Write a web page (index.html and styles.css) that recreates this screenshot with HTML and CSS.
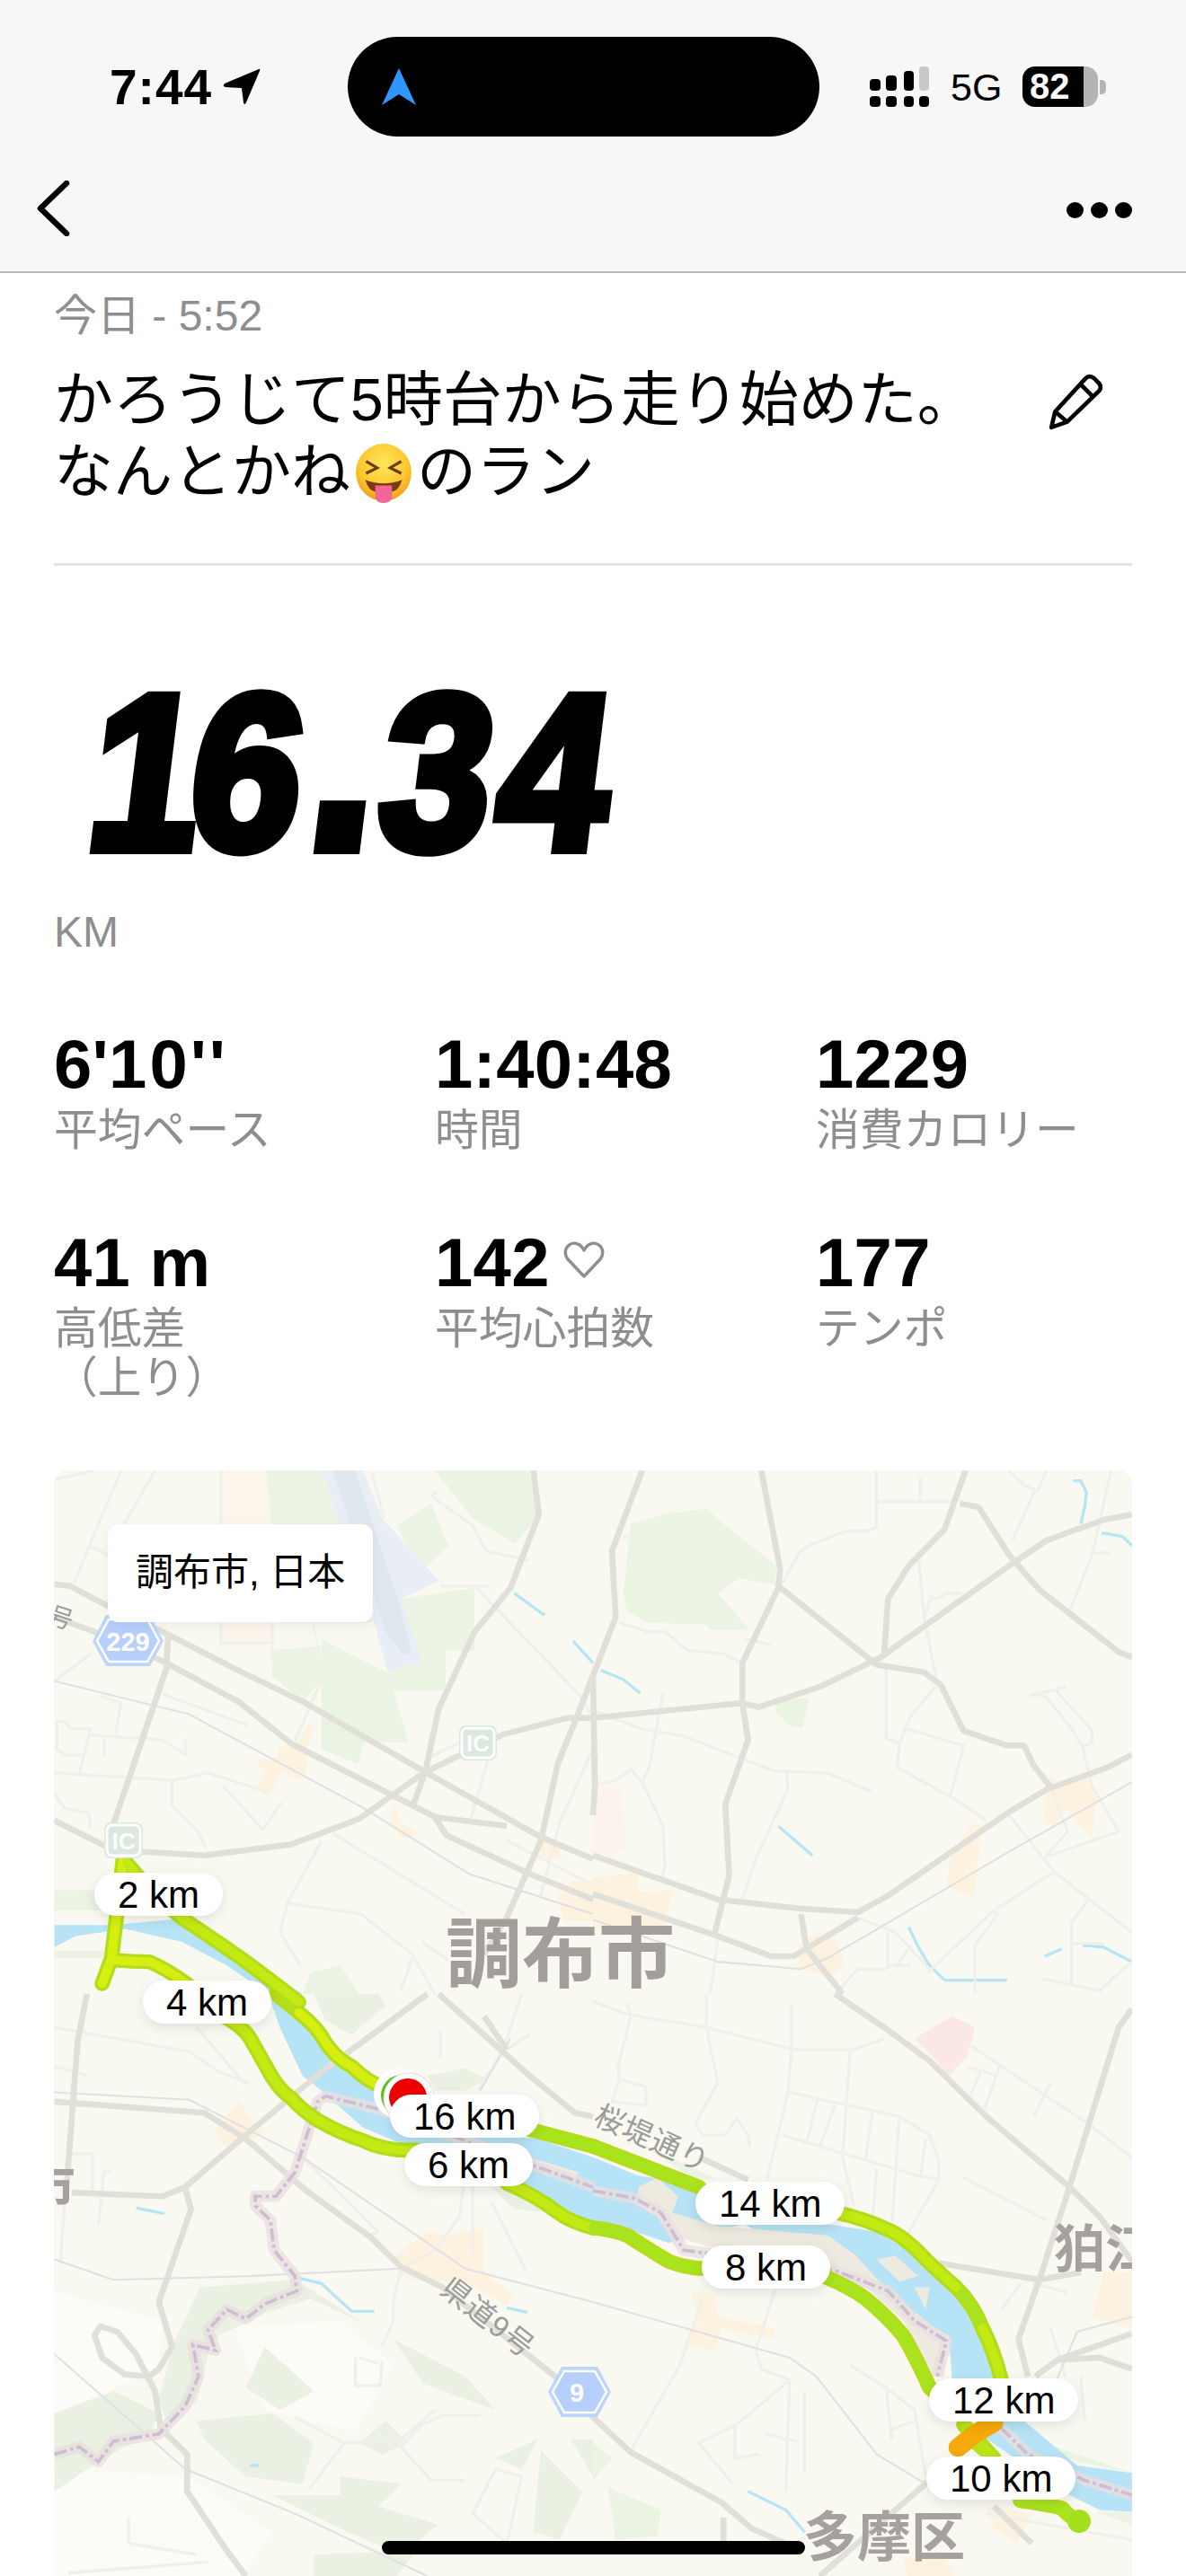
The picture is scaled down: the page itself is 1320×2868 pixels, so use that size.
FILE: index.html
```html
<!DOCTYPE html>
<html lang="ja">
<head>
<meta charset="utf-8">
<title>ラン</title>
<link rel="stylesheet" href="styles.css">
</head>
<body>
<header class="top">
  <div class="status">
    <span class="time">7:44</span>
    <svg class="loc" viewBox="0 0 42 41"><path d="M40 1 Q42 0 41 3 L26 38 Q24 42 23 38 L21 22 L3 21 Q-1 20 2 17 Z"/></svg>
    <div class="island"><svg class="nav" viewBox="0 0 38 41"><path d="M19 0 L38 41 L19 29 L0 41 Z"/></svg></div>
    <svg class="signal" viewBox="0 0 66 45">
      <rect x="0" y="14" width="12" height="13" rx="4"/><rect x="18" y="10" width="12" height="17" rx="4"/><rect x="38" y="5" width="11" height="22" rx="4"/><rect class="off" x="55" y="0" width="11" height="27" rx="4"/>
      <rect x="0" y="33" width="12" height="12" rx="4"/><rect x="18" y="33" width="12" height="12" rx="4"/><rect x="38" y="33" width="11" height="12" rx="4"/><rect x="55" y="33" width="11" height="12" rx="4"/>
    </svg>
    <span class="net">5G</span>
    <div class="batt"><span class="batt-body">82</span><span class="batt-nub"></span></div>
  </div>
  <div class="navbar">
    <svg class="back" viewBox="0 0 38 62"><path d="M34 3 L5 31 L34 59"/></svg>
    <div class="dots"><i></i><i></i><i></i></div>
  </div>
</header>

<main class="content">
  <p class="date">今日 - 5:52</p>
  <div class="title-row">
    <h1 class="title">かろうじて5時台から走り始めた。<br>なんとかね<svg class="emoji" viewBox="0 0 66 66"><defs><radialGradient id="face" cx="50%" cy="35%" r="65%"><stop offset="0" stop-color="#ffe65c"/><stop offset=".7" stop-color="#fcc52c"/><stop offset="1" stop-color="#f39a16"/></radialGradient></defs><ellipse cx="33" cy="32" rx="30" ry="31" fill="url(#face)"/><path d="M14 20 L26 27 L14 33 M52 20 L40 27 L52 33" fill="none" stroke="#6b3a10" stroke-width="3"/><path d="M13 40 Q33 48 53 40 Q49 52 42 53 H24 Q17 52 13 40 Z" fill="#7a3a12"/><path d="M24 46 H42 V57 Q42 65 33 65 Q24 65 24 57 Z" fill="#f2659b"/></svg>のラン</h1>
    <svg class="pencil" viewBox="0 0 60 62"><path d="M5 58 L9 41 L42 5 Q46 1 51 5 L56 10 Q60 15 56 19 L22 52 Z M36 11 L50 25 M9 41 L22 52"/></svg>
  </div>
  <hr class="rule">
  <div class="bignum"><span class="bigtext"><span class="bigone">1</span>6<span class="bigdot">.</span>34</span></div>
  <p class="unit">KM</p>

  <section class="stats">
    <div><div class="val">6'1<span class="val-gap">0''</span></div><div class="lab">平均ペース</div></div>
    <div><div class="val">1:40:48</div><div class="lab">時間</div></div>
    <div><div class="val">1229</div><div class="lab">消費カロリー</div></div>
    <div><div class="val">41 m</div><div class="lab">高低差<br>（上り）</div></div>
    <div><div class="val">142<svg class="heart" viewBox="0 0 46 42"><path d="M23 39 L5 20 C-3 9 8 -2 18 4 Q21 6 23 10 Q25 6 28 4 C38 -2 49 9 41 20 Z"/></svg></div><div class="lab">平均心拍数</div></div>
    <div><div class="val">177</div><div class="lab">テンポ</div></div>
  </section>

  <section class="map">
    <svg class="mapsvg" viewBox="60 1637 1200 1231">
      <rect class="land" x="60" y="1637" width="1200" height="1231"/>
      <!-- terrain -->
      <g class="pale">
        <path transform="matrix(.4209 0 0 .4133 0 2220)" d="M144 800 L430 880 L420 1010 L144 1130 Z M620 900 L900 880 L1040 1000 L940 1180 L700 1120 Z M144 1280 L500 1300 L720 1450 L640 1568 H144 Z"/>
      </g>
      <g class="peach">
        <path transform="matrix(.4209 0 0 .4082 0 1580)" d="M584 140 H700 L740 290 H584 Z M584 555 H720 V610 H584 Z"/>
      </g>
      <g class="green">
        <path transform="matrix(.4209 0 0 .4082 0 1580)" d="M705 140 H860 L990 300 L985 555 H830 L860 700 L800 770 L720 700 V630 L840 620 L825 555 H740 Z M850 600 L1040 700 L1030 740 L1040 740 L1080 880 L965 880 L945 940 L850 900 Z M1060 490 L1255 460 V630 H1178 V740 H1020 Z M1050 290 L1140 230 L1185 345 L1110 420 Z M1150 140 H1400 L1420 270 L1360 340 L1250 270 Z M144 1285 H290 V1340 H144 Z M144 1450 H280 V1470 H144 Z M820 1510 L900 1490 L950 1568 H800 Z"/>
        <path transform="matrix(.4209 0 0 .4082 660 1580)" d="M100 285 L210 255 L300 245 L350 290 L485 400 L480 450 L385 435 L330 475 L415 575 H310 L300 560 L145 555 L90 525 L80 480 Z M480 770 L570 760 L555 840 H525 L485 800 Z"/>
        <path transform="matrix(.4209 0 0 .4133 660 2220)" d="M120 400 L330 500 L270 500 Z M40 1330 L180 1390 L170 1460 L60 1470 Z M0 1210 L50 1250 L0 1310 Z M1140 1190 L1425 1290 L1280 1260 Z M1330 1395 H1425 V1430 Z"/>
      </g>
      <g class="hill">
        <path transform="matrix(.4209 0 0 .4133 0 2220)" d="M530 790 L780 770 L960 885 L820 820 L700 860 L560 930 L520 1100 L440 1150 L420 1090 L460 940 Z M144 1130 L300 1070 L420 1130 L400 1180 L260 1260 L144 1340 Z M1040 930 L1230 1030 L1310 1120 L1120 1050 Z M700 950 L830 1070 L740 1120 L650 1060 Z M1020 1150 L1080 1210 L1010 1240 L950 1210 Z M520 1150 L720 1130 L830 1210 L800 1320 L650 1300 L540 1200 Z M900 1300 L1060 1320 L1000 1380 L1160 1430 L1060 1510 L900 1440 L720 1350 L900 1350 Z M1310 1250 L1420 1200 L1380 1280 Z M1430 1230 L1540 1340 L1480 1470 L1410 1450 Z M1510 1200 H1568 V1300 Z M830 1510 L1100 1500 L1050 1568 H830 Z M830 0 H1000 L1020 30 L930 110 L860 70 Z M1130 220 L1230 200 L1290 230 L1230 260 L1150 260 Z M1300 520 L1370 520 L1480 590 L1360 580 Z"/>
      </g>
      <g class="air">
        <path transform="matrix(.4209 0 0 .4082 0 1580)" d="M850 140 H960 L1010 270 L1160 440 L1060 490 L1115 660 L1025 690 L990 560 Z"/>
      </g>
      <g class="run">
        <path transform="matrix(.4209 0 0 .4082 0 1580)" d="M880 140 H940 L1060 520 L1090 640 L1065 640 L1020 580 Z"/>
      </g>
      <g class="orange">
        <path transform="matrix(.4209 0 0 .4082 0 1580)" d="M790 880 L815 830 L830 845 L810 900 L810 975 L790 985 L745 960 L720 1010 L705 1030 L680 1005 L700 960 L675 930 L730 925 L740 895 Z M1040 1050 L1060 1100 L1110 1130 L1070 1145 L1030 1110 Z M1475 1300 L1510 1260 H1568 V1370 H1490 Z M1430 1150 H1480 V1200 H1430 Z"/>
        <path transform="matrix(.4209 0 0 .4082 660 1580)" d="M0 1250 L120 1235 L120 1290 L210 1285 L190 1390 H0 Z M1000 1105 H1030 L1015 1230 L1005 1305 L935 1270 L945 1200 Z M1200 1000 L1210 970 L1240 1000 L1300 965 L1330 1030 L1320 1140 L1290 1110 L1250 1060 L1220 1115 L1195 1100 Z M545 1430 L600 1400 L640 1420 L665 1480 L630 1520 L545 1500 Z"/>
        <path transform="matrix(.4209 0 0 .4133 0 2220)" d="M570 360 L630 290 L700 380 L590 410 Z M1040 710 L1130 640 L1180 650 L1280 630 L1280 750 L1355 810 L1340 840 L1230 780 L1100 770 L1060 760 Z"/>
        <path transform="matrix(.4209 0 0 .4133 660 2220)" d="M260 800 L320 810 L330 870 L480 900 L480 930 L340 900 L320 960 L240 940 L280 880 Z M1350 750 H1425 V900 L1320 870 Z M1040 1380 L1160 1400 L1120 1480 L1060 1440 Z M820 1520 L920 1500 L960 1568 H830 Z"/>
      </g>
      <g class="pink">
        <path transform="matrix(.4209 0 0 .4133 660 2220)" d="M850 120 L950 60 L1010 90 L990 170 L940 220 L900 170 Z"/>
        <path class="pink-soft" transform="matrix(.4209 0 0 .4082 660 1580)" d="M0 1000 H75 L85 1170 L40 1200 L0 1180 Z"/>
      </g>
      <!-- water -->
      <g class="water">
        <path transform="matrix(.4209 0 0 .4082 0 1580)" d="M144 1380 H300 L480 1362 L600 1440 L800 1568 H710 L600 1490 L480 1425 L330 1390 L200 1410 L144 1440 Z"/>
        <path transform="matrix(.4209 0 0 .4133 0 2220)" d="M710 0 H750 L850 140 L960 240 L1040 300 L1200 370 L1420 390 L1568 440 V620 L1480 570 L1340 510 L1100 420 L960 360 L850 260 L800 220 L740 90 Z"/>
        <path transform="matrix(.4209 0 0 .4133 660 2220)" d="M0 440 L120 490 L330 520 L620 620 L750 640 L880 720 L990 830 L1060 960 L1090 1040 L1140 1150 L1280 1270 L1425 1290 V1395 L1340 1390 L1240 1340 L1100 1240 L1030 1190 L1080 1150 L950 1040 L940 920 L820 850 L700 770 L610 740 L400 620 L200 670 L80 630 L0 610 Z"/>
      </g>
      <g class="sand">
        <path transform="matrix(.4209 0 0 .4133 660 2220)" d="M120 520 L170 495 L225 545 L210 590 L330 625 L620 650 L690 700 L780 800 L930 920 L930 1030 L900 1030 L820 880 L720 790 L610 730 L300 680 L210 650 L170 600 L120 570 Z M750 715 L800 705 L860 760 L810 775 Z M850 790 L890 790 L880 850 Z"/>
        <path transform="matrix(.4209 0 0 .4133 0 2220)" d="M1400 440 L1530 480 L1520 500 L1440 480 Z"/>
      </g>
      <g class="stream">
        <path transform="matrix(.4209 0 0 .4082 0 1580)" d="M1360 475 L1440 535 M1515 605 L1568 665"/>
        <path transform="matrix(.4209 0 0 .4082 660 1580)" d="M20 685 L80 710 L125 748 M490 1110 L580 1190 M1270 168 H1290 L1305 200 L1300 240 L1290 285 M1345 310 L1400 320 L1425 345 M835 1385 L860 1440 L890 1490 L930 1530 H1095 M1195 1465 L1240 1445 M1295 1435 L1350 1440 L1425 1480"/>
        <path transform="matrix(.4209 0 0 .4133 0 2220)" d="M360 576 L435 592 M790 765 L850 780 L930 855 H990 M1340 845 L1395 858 M660 1270 H685"/>
        <path transform="matrix(.4209 0 0 .4133 660 2220)" d="M410 1340 L510 1390 L560 1450"/>
      </g>
      <!-- thin roads -->
      <g class="thin">
        <path transform="matrix(.4209 0 0 .4082 0 1580)" d="M144 165 L250 140 M320 140 L190 460 M410 140 L320 300 M235 345 L285 370 M144 715 L240 640 M584 290 V140 M584 555 V610 H720 M720 555 V660 L840 625 L855 700 L780 880 M265 755 L320 775 L305 860 M150 825 H175 L185 845 H240 L210 965 M150 825 V900 L170 915 H220 M240 862 L430 875 L490 915 L490 870 M275 870 V920 M144 965 L455 985 L550 965 L700 1015 M455 985 V1055 L520 1120 L545 1170 M590 1000 L695 1120 L745 1045 M144 1020 L170 1060 L235 1075 L240 1115 M430 750 L655 835 M880 1130 L1230 1350 M850 1150 L760 1320 L740 1400 L795 1490 M760 1320 L955 1350 L1090 1460 L1150 1568 M1140 920 L1220 880 M1260 460 L1530 750 L1560 800 M1290 930 L1245 1090 M1340 1150 L1568 1270 M1060 1560 L1090 1470 M1115 1425 L1185 1475 M1140 210 L1250 290 L1285 360 L1400 385 M1140 210 L1155 198 M985 150 L1015 270 M1290 455 H1165 M1568 900 L1480 1100 L1430 1300"/>
        <path transform="matrix(.4209 0 0 .4082 660 1580)" d="M750 140 V225 H960 M865 160 V225 M750 225 V295 L725 305 H670 L570 345 L545 365 L500 450 M70 555 L145 580 H190 L250 630 L345 640 L395 665 M400 600 L470 615 M80 320 L440 415 L490 455 M185 745 L150 945 L130 990 L185 1110 L190 1220 L180 1260 M0 1000 L60 985 L100 955 L130 990 M0 795 L130 845 L240 865 L480 960 L620 965 L735 1015 M512 960 L515 1010 L430 1200 L395 1310 M862 385 L875 540 L910 720 M875 540 L895 485 L910 490 L935 475 H975 M775 680 V870 L810 885 L805 950 L945 1030 L1040 1095 M1100 1080 L1220 1235 L1425 1400 M830 845 L980 890 L945 1030 M905 730 L840 810 L810 885 M1170 190 L1110 330 M1100 140 L1140 180 L1175 195 L1200 140 M1370 140 L1320 370 L1260 525 M1320 365 H1365 M1155 755 L1250 730 M1220 735 L1320 850 V880 L1295 895 L1270 850 L1200 760 L1175 750 M1295 895 L1320 1000 L1390 1125 L1195 1195 L1255 1125 L1210 1000 M1060 1340 L885 1510 M1060 1340 L1070 1350 L1010 1435 V1568 M1220 1235 L1060 1340 M1310 1310 L1265 1375 V1540 M1265 1430 H1350 M1185 1525 L1340 1560 L1380 1520 L1425 1480 M780 1400 V1490 H840 M700 1360 L800 1400 L890 1500 M840 1435 L800 1495 M640 1568 L700 1500 H770 L790 1490 M310 1568 L330 1420"/>
        <path transform="matrix(.4209 0 0 .4133 0 2220)" d="M144 90 L500 155 L580 210 L660 240 M144 195 L230 220 M160 720 L180 430 H245 V530 M260 620 L275 480 L295 475 M520 90 L650 245 M800 440 L1000 640 L980 650 M1225 520 L1215 600 L1150 690 L1060 740 L1040 830 V880 L1010 950 M1250 400 V700 M1300 560 L1390 745 M1380 0 L1330 150 L1265 260 M1400 110 L1340 150 M1165 100 V170 M1270 1135 H1170 L1115 1160 L1060 1220 L1140 1310 H1230 M780 1140 L910 1210 L820 1330 M1150 1120 L1060 1200 L910 1210 M1310 1280 L1250 1400 L1340 1480 L1380 1300 Z M340 1410 V1480 L520 1510 M180 1560 L550 1530 M940 980 V1055 H1005 L1010 990 M950 980 L1000 995"/>
        <path transform="matrix(.4209 0 0 .4133 660 2220)" d="M0 20 L90 55 L300 90 L530 150 H690 L770 120 M90 25 L100 60 L65 200 L70 230 L140 250 V300 M70 230 L50 290 L140 300 M300 0 V90 L330 240 L270 350 L290 380 H350 L380 335 L410 380 L415 410 M525 30 V150 L515 270 L460 500 M520 265 L810 330 L890 380 L915 450 V500 L860 490 L500 380 M595 280 L565 400 M640 300 L600 410 M740 310 L720 450 M810 330 L790 630 M680 150 L660 440 L690 570 M880 390 L865 495 M750 470 L740 600 M915 500 L830 650 M290 820 L230 1000 L100 1230 M490 770 L430 960 L445 1010 L520 1040 L510 1340 M520 1040 L380 1160 L280 1210 L370 1320 M375 1160 V1250 L440 1240 M455 1185 L540 1205 M560 1070 V1290 M680 1000 L780 1065 L850 1120 L880 1300 M785 1175 L850 1150 M775 1055 L790 1200 M1080 850 L1130 780 M1210 900 L1250 1030 M1000 140 L1310 350 L1425 440 M1075 195 L1035 310 M990 195 L1070 220 M1025 210 L1000 270 M1210 240 L1165 330 M980 495 L1200 610 M1290 1030 L1300 1150 M1165 780 L1255 805 M1040 1400 L1425 1470"/>
      </g>
      <g class="rail">
        <path transform="matrix(.4209 0 0 .4082 0 1580)" d="M144 715 L500 805 L960 1060 L1240 1240 L1568 1350"/>
        <path transform="matrix(.4209 0 0 .4082 660 1580)" d="M0 1365 L330 1480 L550 1500 L620 1470 L1100 1180 L1425 990"/>
        <path transform="matrix(.4209 0 0 .4133 0 2220)" d="M144 265 L500 285 L800 440 L1230 740 L1568 830 M144 715 L300 770 L660 760 L1060 740 M144 970 L490 1280 L780 1400 L1130 1568 M1350 120 L1270 260"/>
        <path transform="matrix(.4209 0 0 .4133 660 2220)" d="M0 830 L520 980 L590 1030 L750 1240 L880 1320 M1425 870 L1280 910 L1180 1150"/>
      </g>
      <!-- major roads -->
      <g class="major">
        <path transform="matrix(.4209 0 0 .4082 0 1580)" d="M144 450 L185 455 L285 510 L430 580 L620 680 L800 770 L1120 960 L1430 1140 L1568 1200 M144 540 L250 580 L430 660 L630 770 L770 885 L1150 1085 L1180 1135 L1400 1240 L1568 1310 M144 1095 L280 1165 L380 1180 L540 1190 L770 1160 L950 1090 L1120 965 L1220 915 L1330 860 L1500 815 L1568 815 M1410 140 L1425 260 L1350 460 L1255 580 L1160 790 L1125 960 L1090 1060 M445 580 L440 680 L280 1165 M1568 700 L1530 800 L1475 940 L1430 1150 L1340 1360 L1280 1460 M1150 1085 L1340 1110"/>
        <path transform="matrix(.4209 0 0 .4082 660 1580)" d="M0 1190 L330 1310 L550 1335 L700 1345 L780 1300 L1095 1075 L1200 1010 L1360 950 L1425 915 M0 1295 L330 1410 L470 1465 L530 1465 L700 1360 M0 815 L390 775 L440 785 L600 730 L760 650 L1100 400 L1200 330 L1350 275 L1425 260 M130 140 L50 360 L60 540 L0 700 L5 1000 L0 1080 M445 140 L495 410 L490 460 L395 665 L395 775 L410 875 L350 1050 L360 1245 L320 1410 M490 455 L750 670 L875 690 L920 725 L980 850 L1095 890 L1140 890 L1165 945 L1215 1010 M985 140 L930 300 L835 400 L780 490 L770 640 M970 230 L1020 240 L1100 370 L1180 465 L1260 530 L1390 635 L1425 650 M550 1350 L565 1445 L660 1568"/>
        <path transform="matrix(.4209 0 0 .4133 0 2220)" d="M144 290 L540 320 L650 390 L810 530 L980 655 L1060 735 L1170 790 L1480 1040 L1568 1140 M1130 0 L850 210 L650 380 L490 520 L430 545 L190 535 M230 0 L205 130 L175 535 M490 525 L505 580 L420 830 L455 950 L420 1010 L395 1030 L330 1025 L270 980 L250 920 L265 895 L310 910 L360 970 L410 1070 L425 1170 L495 1240 L495 1340 L600 1500 L650 1568 M1160 0 L1400 220 L1520 320 L1568 330 M1280 60 L1340 150"/>
        <path transform="matrix(.4209 0 0 .4133 660 2220)" d="M0 1140 L100 1235 L340 1370 L420 1440 L530 1490 M640 0 L770 90 L890 180 L1040 330 L1260 520 L1340 600 L1425 720 M1425 40 L1390 90 L1260 520 L1180 770 L1125 930 L1150 1030 M915 725 L1180 770 L1290 750 M1170 1030 L1230 985 L1340 980 L1425 1010 M1230 985 L1425 915 M280 440 L410 500 M890 1310 L600 1568 M345 1410 V1480 M1060 1380 L1160 1480"/>
      </g>
      <!-- boundary -->
      <g class="halo">
        <path transform="matrix(.4209 0 0 .4133 0 2220)" d="M144 1240 L210 1220 L260 1260 L300 1205 L420 1185 L490 1110 L525 1030 L510 945 L570 960 L550 905 L600 850 L650 875 L700 835 L785 800 L780 760 L725 690 L715 610 L675 570 L675 545 L730 545 L780 480 L815 370 L840 290 L860 275 L1000 310 L1568 520"/>
        <path transform="matrix(.4209 0 0 .4133 660 2220)" d="M0 530 L110 550 L180 590 L240 690 L640 745 L780 800 L850 880 L935 935 L910 1030 M1080 1170 L1150 1240 L1300 1310 L1425 1350"/>
      </g>
      <g class="dash">
        <path transform="matrix(.4209 0 0 .4133 0 2220)" d="M144 1240 L210 1220 L260 1260 L300 1205 L420 1185 L490 1110 L525 1030 L510 945 L570 960 L550 905 L600 850 L650 875 L700 835 L785 800 L780 760 L725 690 L715 610 L675 570 L675 545 L730 545 L780 480 L815 370 L840 290 L860 275 L1000 310 L1568 520"/>
        <path transform="matrix(.4209 0 0 .4133 660 2220)" d="M0 530 L110 550 L180 590 L240 690 L640 745 L780 800 L850 880 L935 935 L910 1030 M1080 1170 L1150 1240 L1300 1310 L1425 1350"/>
      </g>
      <!-- map labels -->
      <text class="city" x="496" y="2206">調布市</text>
      <text class="town" x="1173" y="2524">狛江</text>
      <text class="town town-w" x="894" y="2846">多摩区</text>
      <text class="town" x="27" y="2456">市</text>
      <text class="road-t" transform="translate(659 2364) rotate(24)">桜堤通り</text>
      <text class="road-t" transform="translate(488 2552) rotate(38)">県道9号</text>
      <text class="road-s" transform="translate(52 1806) rotate(18)">号</text>
      <!-- route -->
      <g class="route">
        <path transform="matrix(.4209 0 0 .4082 0 1580)" d="M325 1205 L310 1340 L295 1470 L270 1540 M300 1475 Q350 1480 395 1480 Q440 1500 480 1530 L600 1620 M335 1210 L400 1290 L480 1360 Q590 1435 650 1480 T790 1590"/>
        <path transform="matrix(.4209 0 0 .4133 0 2220)" d="M730 0 L790 50 Q840 90 860 130 Q890 175 930 195 Q970 235 1010 250 M590 60 Q650 90 670 135 L720 225 Q745 265 770 280 Q800 315 840 340 Q900 375 960 395 Q1020 425 1100 420 M1340 510 Q1420 545 1470 585 Q1510 615 1568 630 M1400 365 L1568 410"/>
        <path transform="matrix(.4209 0 0 .4133 660 2220)" d="M0 630 Q50 635 90 650 Q150 690 200 720 Q250 740 300 740 M610 760 Q680 790 720 820 Q780 870 820 920 Q850 970 890 1060 L910 1080 M980 1160 L1060 1250 M1130 1365 Q1200 1375 1240 1385 Q1270 1420 1290 1420 M1080 1040 Q1060 960 1030 900 Q1005 835 960 790 Q910 745 880 715 Q830 660 790 640 Q720 605 650 590 M280 520 L0 410"/>
      </g>
      <g class="route-in">
        <path class="r-y" transform="matrix(.4209 0 0 .4082 0 1580)" d="M325 1205 L310 1340 L295 1470 L270 1540 M300 1475 Q350 1480 395 1480 Q440 1500 480 1530 L600 1620"/>
        <path class="r-l" transform="matrix(.4209 0 0 .4082 0 1580)" d="M335 1210 L400 1290 L480 1360 Q590 1435 650 1480 T790 1590"/>
        <path class="r-l" transform="matrix(.4209 0 0 .4133 0 2220)" d="M590 60 Q650 90 670 135 L720 225 Q745 265 770 280 Q800 315 840 340 Q900 375 960 395 Q1020 425 1100 420 M1340 510 Q1420 545 1470 585 Q1510 615 1568 630"/>
        <path class="r-y" transform="matrix(.4209 0 0 .4133 0 2220)" d="M790 50 Q840 90 860 130 Q890 175 930 195 Q970 235 1010 250"/>
        <path class="r-g" transform="matrix(.4209 0 0 .4133 0 2220)" d="M1400 365 L1568 410"/>
        <path class="r-g" transform="matrix(.4209 0 0 .4133 660 2220)" d="M0 630 Q50 635 90 650 Q150 690 200 720 Q250 740 300 740 M610 760 Q680 790 720 820 Q780 870 820 920 Q850 970 890 1060 M1130 1365 Q1200 1375 1240 1385 Q1270 1420 1290 1420 M1030 900 Q1005 835 960 790 M280 520 L0 410"/>
        <path class="r-l" transform="matrix(.4209 0 0 .4133 660 2220)" d="M1080 1040 Q1060 960 1030 900 M960 790 Q910 745 880 715 Q830 660 790 640 Q720 605 650 590"/>
        <path class="r-ye" transform="matrix(.4209 0 0 .4133 660 2220)" d="M990 1170 L1010 1210 L1050 1245"/>
        <path class="r-o" transform="matrix(.4209 0 0 .4133 660 2220)" d="M1060 1155 L1010 1185 L965 1222"/>
      </g>
      <circle class="end-dot" cx="1201" cy="2807" r="13"/>
      <!-- start / finish markers -->
      <circle class="m-w" cx="444" cy="2331" r="28"/>
      <circle class="m-gr" cx="447" cy="2333" r="23"/>
      <circle class="m-w2" cx="455" cy="2336" r="28"/>
      <circle class="m-r" cx="454" cy="2335" r="21"/>
      <!-- shields -->
      <g class="shield">
        <path d="M103 1827 L118 1798 H167 L182 1827 L167 1855 H118 Z"/>
        <path class="shield-in" d="M108 1827 L121 1803 H164 L177 1827 L164 1850 H121 Z"/>
        <text x="142.500" y="1838">229</text>
        <path d="M610 2663 L625 2635 H665 L680 2663 L665 2691 H625 Z"/>
        <path class="shield-in" d="M615 2663 L628 2640 H662 L675 2663 L662 2686 H628 Z"/>
        <text x="642" y="2674">9</text>
      </g>
      <g class="ic">
        <rect x="511" y="1921" width="42" height="39" rx="8"/><rect class="ic-in" x="514" y="1924" width="36" height="33" rx="6"/><text x="532" y="1950">IC</text>
        <rect x="116" y="2029" width="43" height="40" rx="8"/><rect class="ic-in" x="119" y="2032" width="37" height="34" rx="6"/><text x="137.500" y="2059">IC</text>
      </g>
    </svg>
    <div class="place">調布市, 日本</div>
    <span class="pill p2">2 km</span>
    <span class="pill p4">4 km</span>
    <span class="pill p16">16 km</span>
    <span class="pill p6">6 km</span>
    <span class="pill p14">14 km</span>
    <span class="pill p8">8 km</span>
    <span class="pill p12">12 km</span>
    <span class="pill p10">10 km</span>
  </section>
</main>
<div class="home"></div>
</body>
</html>
```

FILE: styles.css
```css
* { box-sizing: border-box; }
html, body { margin: 0; padding: 0; }
body {
  position: relative;
  width: 1320px;
  height: 2868px;
  overflow: hidden;
  background: #fff;
  color: #000;
  font-family: "Liberation Sans", "Noto Sans CJK JP", sans-serif;
}

/* top bars */
.top { height: 304px; background: #f7f7f7; border-bottom: 2px solid #b8b8b8; }
.status { display: flex; align-items: center; height: 152px; padding: 41px 0 0 122px; }
.time { width: 126px; font-size: 55px; font-weight: 700; letter-spacing: 1px; line-height: 60px; }
.loc { width: 42px; height: 41px; }
.loc path { fill: #000; }
.island { display: flex; align-items: center; width: 525px; height: 111px; margin-left: 97px; padding-left: 38px; background: #000; border-radius: 56px; }
.nav { width: 38px; height: 41px; }
.nav path { fill: #2f96ff; }
.signal { width: 66px; height: 45px; margin-left: 56px; }
.signal rect { fill: #000; }
.signal .off { fill: #c9c9c9; }
.net { width: 57px; margin-left: 24px; font-size: 43px; line-height: 46px; }
.batt { display: flex; align-items: center; margin-left: 23px; }
.batt-body { width: 84px; height: 45px; padding-left: 8px; background: linear-gradient(90deg, #000 81%, #b4b4b4 81%); border-radius: 14px; color: #fff; font-size: 40px; font-weight: 700; line-height: 45px; }
.batt-nub { width: 7px; height: 16px; margin-left: 2px; background: #b4b4b4; border-radius: 0 5px 5px 0; }
.navbar { display: flex; align-items: center; justify-content: space-between; height: 150px; padding: 10px 60px 0 40px; }
.back { width: 38px; height: 62px; }
.back path { fill: none; stroke: #000; stroke-width: 6.500; stroke-linecap: round; stroke-linejoin: round; }
.dots { display: flex; gap: 8px; margin-top: 4px; }
.dots i { display: block; width: 19px; height: 18px; background: #000; border-radius: 50%; }

/* title */
.content { padding: 0 60px; }
.date { margin: 20px 0 0; color: #8e8e8e; font-size: 48px; line-height: 56px; }
.title-row { display: flex; justify-content: space-between; margin-top: 25px; }
.title { margin: 0; font-size: 66px; font-weight: 400; line-height: 80px; white-space: nowrap; }
.emoji { display: inline-block; width: 68px; height: 70px; margin: 0 3px; vertical-align: -14px; }
.pencil { flex: none; width: 62px; height: 64px; margin: 11px 33px 0 0; }
.pencil path { fill: none; stroke: #000; stroke-width: 4.500; stroke-linejoin: round; }
.rule { height: 3px; margin: 62px 0 0; background: #e4e4e4; border: 0; }

/* big number */
.bignum { height: 230px; margin-top: 115px; line-height: 230px; }
.bigtext { display: inline-block; margin-left: 28px; font-size: 246px; font-weight: 700; letter-spacing: 9px; -webkit-text-stroke: 12px #000; transform: skewX(-7deg) scaleX(.9); transform-origin: left bottom; }
.bigone { letter-spacing: -12px; }
.bigdot { font-size: 320px; letter-spacing: 0; line-height: 0; }
.unit { margin: 35px 0 0; color: #8e8e8e; font-size: 48px; line-height: 56px; }

/* stats */
.stats { display: grid; grid-template-columns: repeat(3, 424px); row-gap: 80px; margin-top: 79px; }
.val { display: flex; align-items: center; height: 80px; font-size: 76px; font-weight: 700; letter-spacing: .3px; line-height: 80px; }
.val-gap { margin-left: 3px; letter-spacing: 3px; }
.lab { margin-top: 6px; color: #8e8e8e; font-size: 48.800px; line-height: 55px; }
.heart { width: 46px; height: 42px; margin: -6px 0 0 15px; }
.heart path { fill: none; stroke: #8e8e8e; stroke-width: 3.500; stroke-linejoin: round; }

/* map */
.map { position: relative; height: 1231px; margin-top: 75px; overflow: hidden; border-radius: 16px 16px 0 0; }
.mapsvg { display: block; width: 1200px; height: 1231px; }
.land { fill: #f9f8f1; }
.pale path { fill: #fcfbf7; }
.peach path { fill: #fbf5ec; }
.green path { fill: #ebf3e3; }
.hill path { fill: #eaf0e2; }
.air path { fill: #e9eef6; }
.run path { fill: #dfe8ef; }
.orange path { fill: #fdf2df; }
.pink path { fill: #fbe8e5; }
.pink .pink-soft { fill: #fcf3ec; }
.water path { fill: #b6e3f5; }
.sand path { fill: #efeae0; }
.stream path { fill: none; stroke: #b6e6f6; stroke-width: 8; }
.thin path { fill: none; stroke: #f0f0ea; stroke-width: 8; stroke-linejoin: round; }
.rail path { fill: none; stroke: #e0e0e4; stroke-width: 5; stroke-linejoin: round; }
.major path { fill: none; stroke: #e0e0d9; stroke-width: 16; stroke-linejoin: round; }
.halo path { fill: none; stroke: #e9e0e0; stroke-width: 30; stroke-linejoin: round; opacity: .8; }
.dash path { fill: none; stroke: #cfbdd2; stroke-width: 9; stroke-dasharray: 34 9 9 9; }
.city { fill: #a29e99; font-size: 85px; font-weight: 700; }
.town { fill: #a5a29d; font-size: 57px; font-weight: 700; }
.town-w { font-size: 60px; }
.road-t { fill: #9c9c98; font-size: 33px; letter-spacing: 1px; }
.road-s { fill: #9c9c98; font-size: 27px; }
.route path { fill: none; stroke: #b3dc1a; stroke-width: 40; stroke-linejoin: round; stroke-linecap: round; }
.route-in path { fill: none; stroke-width: 24; stroke-linejoin: round; stroke-linecap: round; }
.route-in .r-y { stroke: #d6ee10; }
.route-in .r-l { stroke: #c4ea14; }
.route-in .r-g { stroke: #a8e41e; }
.route-in .r-o { stroke: #f5a90a; stroke-width: 50; }
.route-in .r-ye { stroke: #b9e418; stroke-width: 34; }
.end-dot { fill: #a5e01e; }
.m-w { fill: #fff; }
.m-gr { fill: #4fc61c; }
.m-w2 { fill: #fff; stroke: #f3d6d6; stroke-width: 1; }
.m-r { fill: #ee0000; }
.shield path { fill: #bdd5fb; }
.shield .shield-in { fill: #b7d0fb; stroke: #fff; stroke-width: 2.500; }
.shield text { fill: #fff; font-size: 29px; font-weight: 700; text-anchor: middle; }
.ic rect { fill: #d9e9df; }
.ic .ic-in { fill: #dbe8e0; stroke: #fff; stroke-width: 3; }
.ic text { fill: #fff; font-size: 26px; font-weight: 700; text-anchor: middle; }
.place { position: absolute; left: 60px; top: 60px; width: 295px; height: 109px; padding-left: 31px; background: #fff; border-radius: 12px; box-shadow: 0 4px 14px rgba(0, 0, 0, .06); font-size: 42px; line-height: 107px; }
.pill { position: absolute; height: 48px; padding: 0 26px; background: #fff; border-radius: 24px; box-shadow: 0 4px 14px rgba(0, 0, 0, .1); font-size: 42px; line-height: 49px; white-space: nowrap; }
.p2 { left: 45px; top: 448px; }
.p4 { left: 99px; top: 568px; }
.p16 { left: 374px; top: 695px; }
.p6 { left: 390px; top: 749px; }
.p14 { left: 714px; top: 792px; }
.p8 { left: 721px; top: 863px; }
.p12 { left: 974px; top: 1011px; }
.p10 { left: 971px; top: 1098px; }
.home { position: absolute; left: 425px; top: 2829px; width: 471px; height: 15px; background: #000; border-radius: 8px; }
```
